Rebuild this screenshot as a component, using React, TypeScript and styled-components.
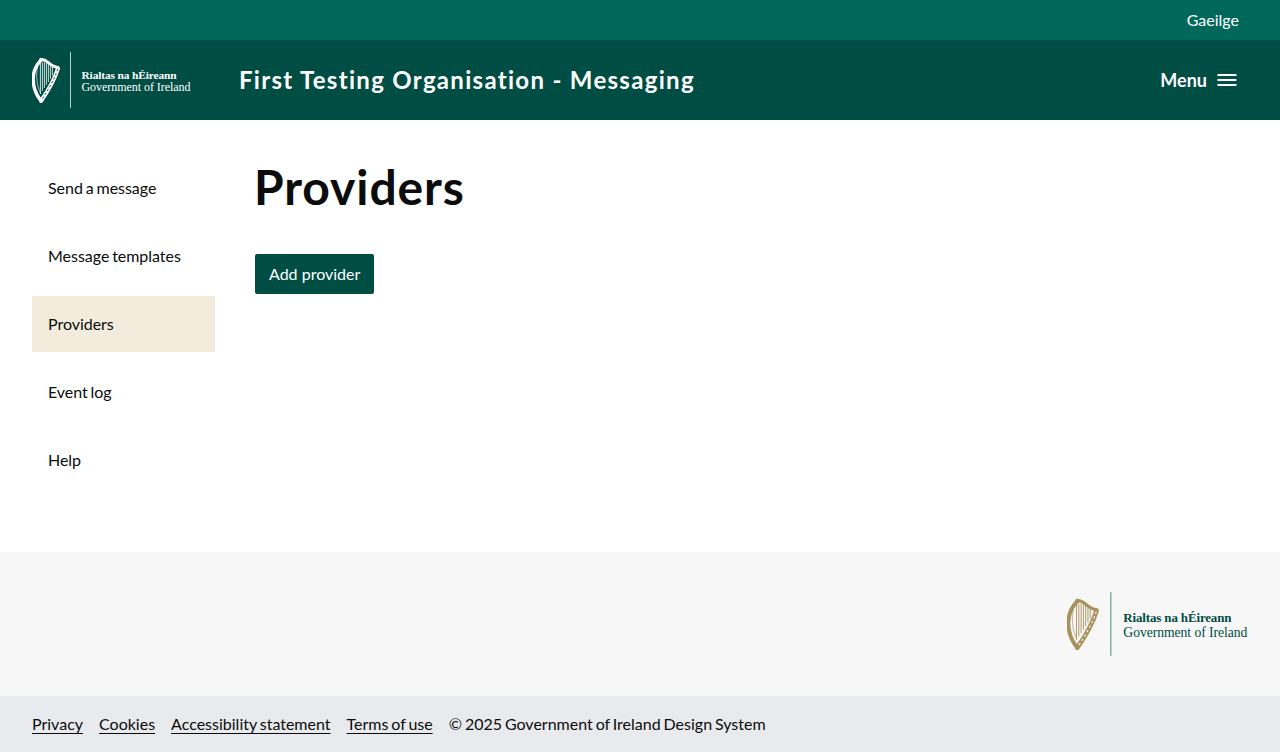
import React from 'react';
import styled, { createGlobalStyle } from 'styled-components';

const GlobalStyle = createGlobalStyle`
  html, body {
    margin: 0;
    padding: 0;
    background: #ffffff;
    font-family: Lato, "Open Sans", sans-serif;
    color: #0b0c0c;
  }
`;

const Page = styled.div`
  display: flex;
  flex-direction: column;
  min-height: 752px;
`;

const TopBar = styled.div`
  height: 40px;
  background: #00685b;
  display: flex;
  align-items: center;
  justify-content: flex-end;
  padding: 0 41px 0 32px;
`;

const LangLink = styled.a`
  color: #ffffff;
  font-size: 16px;
  line-height: 24px;
  text-decoration: none;
`;

const Header = styled.header`
  height: 80px;
  background: #004d44;
  display: flex;
  align-items: center;
  padding: 0 32px;
`;

const HeaderTitle = styled.div`
  margin-left: 48px;
  flex: 1;
  color: #ffffff;
  font-size: 24px;
  line-height: 32px;
  font-weight: 700;
  letter-spacing: 1.3px;
`;

const MenuButton = styled.button`
  background: none;
  border: 0;
  padding: 0;
  margin-right: 9px;
  display: flex;
  align-items: center;
  gap: 8px;
  color: #ffffff;
  font-family: inherit;
  font-size: 18px;
  font-weight: 700;
`;

const Body = styled.div`
  flex: 1;
  display: flex;
  padding: 40px 32px 64px;
  gap: 40px;
`;

const SideNav = styled.nav`
  width: 183px;
  display: flex;
  flex-direction: column;
  gap: 12px;
`;

const NavItem = styled.a<{ $active?: boolean }>`
  height: 56px;
  box-sizing: border-box;
  display: flex;
  align-items: center;
  padding: 0 16px 2px;
  font-size: 16px;
  letter-spacing: -0.03px;
  word-spacing: -1.2px;
  color: #0b0c0c;
  text-decoration: none;
  background: ${props => (props.$active ? '#f3ecdc' : 'transparent')};
`;

const Main = styled.main`
  flex: 1;
  margin-left: -1px;
`;

const Title = styled.h1`
  margin: 0 0 40px;
  font-size: 48px;
  line-height: 54px;
  font-weight: 700;
  letter-spacing: 0.9px;
  color: #0b0c0c;
`;

const PrimaryButton = styled.button`
  height: 40px;
  margin-left: 1px;
  padding: 0 14px 2px;
  border: 0;
  border-radius: 2px;
  background: #004d44;
  color: #ffffff;
  font-family: inherit;
  font-size: 16px;
`;

const FooterTop = styled.div`
  height: 144px;
  box-sizing: border-box;
  background: #f7f7f7;
  display: flex;
  align-items: center;
  justify-content: flex-end;
  padding: 0 32px;
`;

const FooterBottom = styled.footer`
  height: 56px;
  box-sizing: border-box;
  background: #e9eaed;
  display: flex;
  align-items: center;
  gap: 16px;
  padding: 0 32px 2px;
  font-size: 16px;
  word-spacing: -1.2px;
`;

const FooterLink = styled.a`
  color: #0b0c0c;
  text-decoration: underline;
  text-underline-offset: 3px;
  text-decoration-thickness: 1px;
`;

const Copyright = styled.span`
  color: #0b0c0c;
`;

const LogoSvg = styled.svg`
  display: block;
  flex-shrink: 0;
`;

// the harp is a drawing, the two lines of wording stay real text
const GovLogo = ({
  width,
  height,
  harp,
  rule,
  text,
  background,
}: {
  width: number;
  height: number;
  harp: string;
  rule: string;
  text: string;
  background: string;
}) => (
  <LogoSvg width={width} height={height} viewBox="0 0 159 56" aria-label="Rialtas na hÉireann, Government of Ireland">
    <g transform="translate(0 6)" fill="none" stroke={harp} strokeLinecap="round" strokeLinejoin="round">
      {/* fore pillar */}
      <path d="M8.6 2.6C3.4 8 1 15 1.2 22c.2 7.4 3 14.2 6.4 19" strokeWidth="3.4" />
      <path d="M5.8 8.5C3.6 16 4.6 28 8.6 35" strokeWidth=".6" />
      {/* neck with its scroll */}
      <path d="M8.4 1.6c3.2-.6 5.6 1 8 3 3 2.5 6 4.6 9.6 4.8" strokeWidth="2.8" />
      <circle cx="9" cy="1.4" r="1.2" fill={harp} strokeWidth=".6" />
      {/* sound box, the knotwork is a dashed line over it */}
      <path d="M26 10.4C23 20 16 33 9 43" strokeWidth="4" />
      <path d="M25.6 11.6C22.6 20.6 16 32.6 9.8 41.4" stroke={background} strokeWidth="1" strokeDasharray="1.4 3" />
      {/* strings */}
      <path
        d="M8.4 5v31M10.4 4.4v28.4M12.4 4.4v25.6M14.4 5v22M16.4 6v18M18.4 7.6v13M20.4 9v8.4"
        strokeWidth=".8"
        strokeLinecap="butt"
      />
    </g>
    <rect x="38" y="0" width="1" height="56" fill={rule} />
    <text x="49.5" y="26.5" fontFamily='"Liberation Serif", serif' fontSize="11.4" fontWeight="700" fill={text} textLength="95">
      Rialtas na hÉireann
    </text>
    <text x="49.5" y="39" fontFamily='"Liberation Serif", serif' fontSize="12" fill={text} textLength="109">
      Government of Ireland
    </text>
  </LogoSvg>
);

const MenuIcon = () => (
  <svg width="24" height="24" viewBox="0 0 24 24" fill="#ffffff" aria-hidden="true">
    <path d="M2.5 18h19v-2h-19v2zm0-5h19v-2h-19v2zm0-7v2h19V6h-19z" />
  </svg>
);

const navItems = ['Send a message', 'Message templates', 'Providers', 'Event log', 'Help'];
const footerLinks = ['Privacy', 'Cookies', 'Accessibility statement', 'Terms of use'];

const App = () => (
  <Page>
    <GlobalStyle />
    <TopBar>
      <LangLink>Gaeilge</LangLink>
    </TopBar>
    <Header>
      <GovLogo width={159} height={56} harp="#ffffff" rule="#b9cfcb" text="#ffffff" background="#004d44" />
      <HeaderTitle>First Testing Organisation - Messaging</HeaderTitle>
      <MenuButton>
        Menu
        <MenuIcon />
      </MenuButton>
    </Header>
    <Body>
      <SideNav>
        {navItems.map(item => (
          <NavItem key={item} $active={item === 'Providers'}>
            {item}
          </NavItem>
        ))}
      </SideNav>
      <Main>
        <Title>Providers</Title>
        <PrimaryButton>Add provider</PrimaryButton>
      </Main>
    </Body>
    <FooterTop>
      <GovLogo width={181} height={64} harp="#a9915b" rule="#5f9a90" text="#004d44" background="#f7f7f7" />
    </FooterTop>
    <FooterBottom>
      {footerLinks.map(link => (
        <FooterLink key={link}>{link}</FooterLink>
      ))}
      <Copyright>© 2025 Government of Ireland Design System</Copyright>
    </FooterBottom>
  </Page>
);

export default App;
